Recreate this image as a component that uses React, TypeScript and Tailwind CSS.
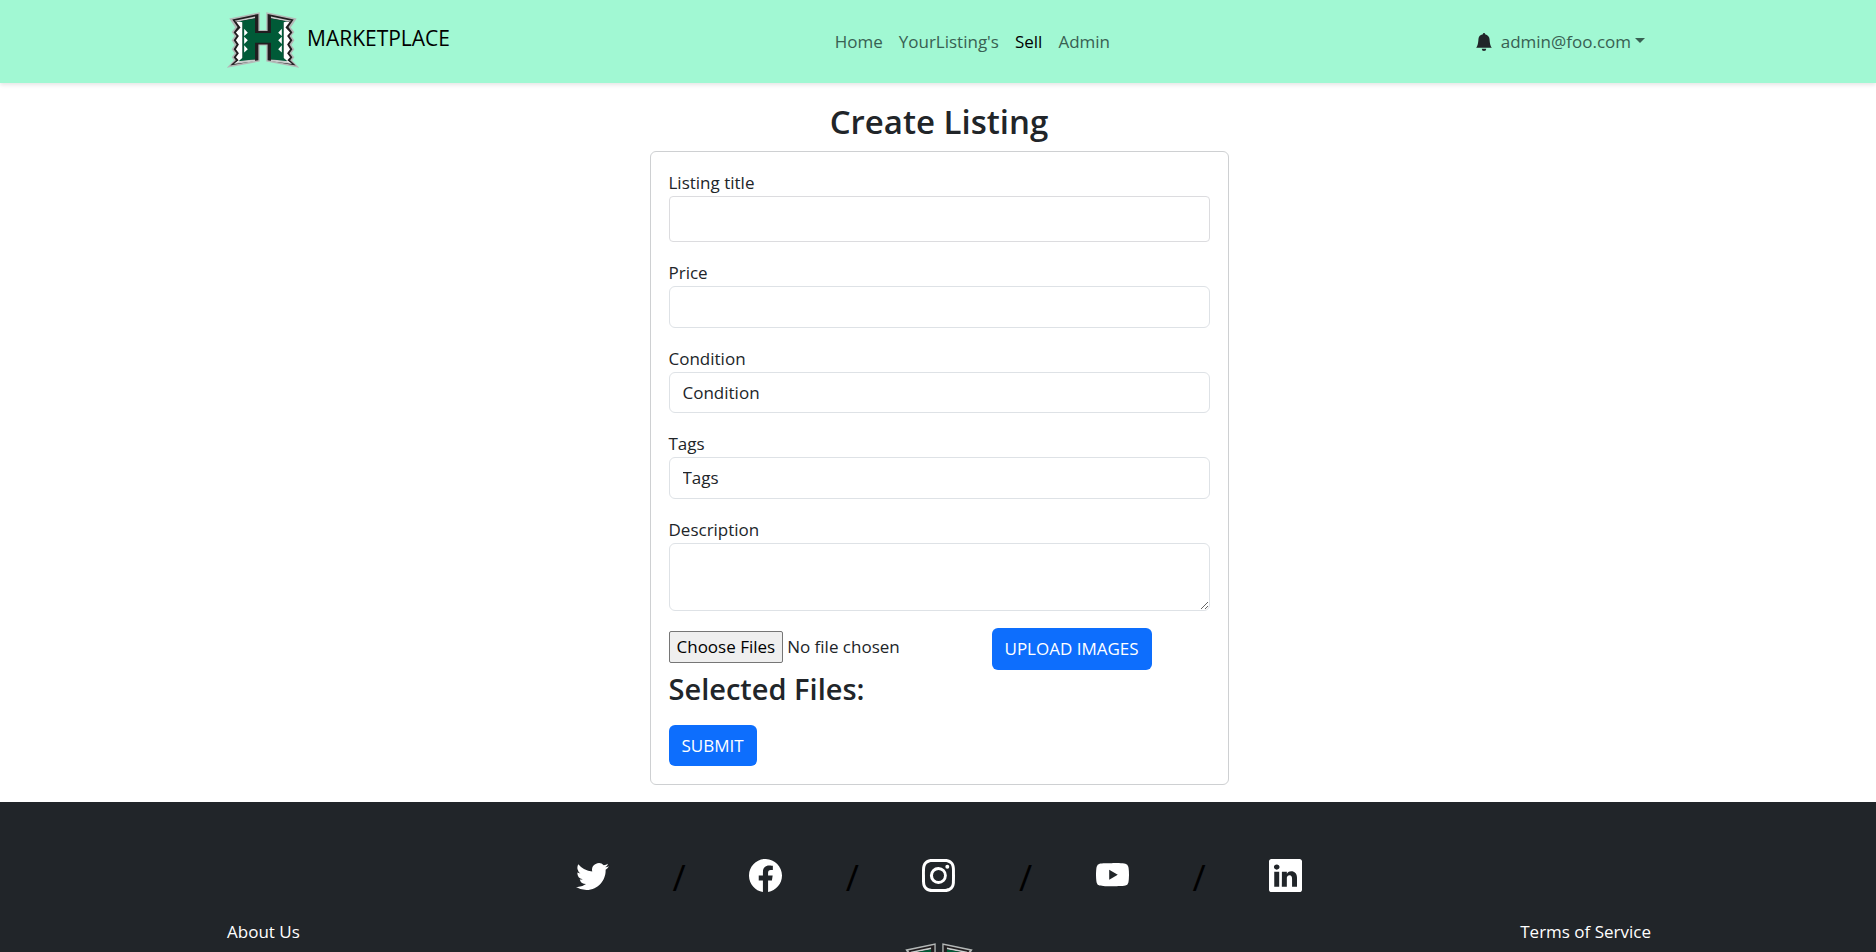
import type { ReactNode } from "react";
import {
  BsBellFill,
  BsFacebook,
  BsInstagram,
  BsLinkedin,
  BsTwitter,
  BsYoutube,
} from "react-icons/bs";

function LogoHalf() {
  return (
    <g>
      <path
        d="M28 33 L120 14 V68 H130 V115 H120 V163 L20 182 L42 159 L35 150 L44 138 L35 126 L44 113 L35 99 L44 86 L35 74 L46 60 Z"
        fill="#b4b8b7"
      />
      <path
        d="M37 36 L116 19 V71 H130 V112 H116 V159 L31 175 L48 159 L41 150 L50 138 L41 126 L50 112 L41 99 L50 86 L41 75 L53 59 Z"
        fill="#211d1f"
      />
      <path d="M44 40 L106 27 V32 L50 43 Z" fill="#c9cdcc" />
      <path d="M42 171 L60 156 L106 157 V162 Z" fill="#c9cdcc" />
      <path
        d="M50 44 L68 40 V159 L44 169 L57 160 L48 150 L57 138 L48 126 L57 112 L48 99 L57 86 L48 75 L62 60 Z"
        fill="#ffffff"
      />
      <path
        d="M56 42 L106 33 V77 H130 V106 H106 V156 L56 162 L68 152 V44 Z"
        fill="#005a37"
      />
      <path d="M73 64 V86 L84 76 Z M73 88 V110 L84 99 Z M73 114 V136 L84 126 Z" fill="#ffffff" />
    </g>
  );
}

function Logo() {
  return (
    <svg viewBox="21 14 218 168" className="h-14 w-18 shrink-0" role="img" aria-label="H logo">
      <LogoHalf />
      <g transform="translate(260 0) scale(-1 1)">
        <LogoHalf />
      </g>
    </svg>
  );
}

function Field({ id, label, children }: { id: string; label: string; children: ReactNode }) {
  return (
    <div className="flex flex-col">
      <label htmlFor={id} className="leading-[26px]">
        {label}
      </label>
      {children}
    </div>
  );
}

function Slash() {
  return <span className="pt-1.5 text-center text-4xl leading-[48px] text-black">/</span>;
}

function Social({ label, children }: { label: string; children: ReactNode }) {
  return (
    <a href="#" aria-label={label} className="flex justify-center text-[33px] text-white">
      {children}
    </a>
  );
}

export default function App() {
  return (
    <div className="flex h-screen flex-col overflow-hidden bg-white font-['Open_Sans','Noto_Sans',sans-serif] text-[17px] text-[#212529]">
      <header className="relative shrink-0 bg-[#a1f8d3] shadow-[0_2px_4px_rgba(0,0,0,0.1)]">
        <div className="mx-auto flex h-[83px] max-w-[1426px] items-center justify-between pl-0.5">
          <a href="#" className="flex items-center gap-2 pb-1 pr-5 text-[21px] text-black">
            <Logo />
            <span className="pb-0.5">MARKETPLACE</span>
          </a>
          <nav className="flex gap-4 text-[#386052]">
            <a href="#">Home</a>
            <a href="#">YourListing's</a>
            <a href="#" className="text-black">
              Sell
            </a>
            <a href="#">Admin</a>
          </nav>
          <div className="flex items-center gap-2 pr-1.5">
            <BsBellFill className="size-[18px]" />
            <button type="button" className="flex items-center gap-1 text-[#386052]">
              admin@foo.com
              <svg viewBox="0 0 10 5" className="mb-0.5 h-[5px] w-2.5" aria-hidden="true">
                <path d="M0 0H10L5 5Z" fill="currentColor" />
              </svg>
            </button>
          </div>
        </div>
      </header>

      <main className="flex shrink-0 flex-col items-center pb-[17px] pl-0.5 pt-[18px]">
        <h2 className="mb-2 text-[33px] font-semibold leading-[42px]">Create Listing</h2>
        <form
          className="w-full max-w-[579px] rounded-md border border-[#ced0d2] px-[18px] py-[18px]"
          onSubmit={(event) => event.preventDefault()}
        >
          <div className="flex flex-col gap-[18px]">
            <Field id="title" label="Listing title">
              <input
                id="title"
                type="text"
                className="h-[46px] rounded border border-[#dcdcdf] px-3"
              />
            </Field>
            <Field id="price" label="Price">
              <input
                id="price"
                type="text"
                className="h-[42px] rounded-md border border-[#dee2e6] px-3"
              />
            </Field>
            <Field id="condition" label="Condition">
              <select
                id="condition"
                className="h-[41px] appearance-none rounded-md border border-[#dee2e6] bg-white px-[13px]"
              >
                <option>Condition</option>
              </select>
            </Field>
            <Field id="tags" label="Tags">
              <select
                id="tags"
                className="h-[42px] appearance-none rounded-md border border-[#dee2e6] bg-white px-[13px]"
              >
                <option>Tags</option>
              </select>
            </Field>
            <Field id="description" label="Description">
              <textarea
                id="description"
                className="h-[68px] resize-y rounded-md border border-[#dee2e6] px-3 py-1.5"
              />
            </Field>
          </div>
          <div className="mt-[17px] flex items-center">
            <input
              type="file"
              multiple
              aria-label="Images"
              className="w-[323px] pb-1 file:mr-1 file:h-8 file:rounded-xs file:border file:border-solid file:border-[#767676] file:bg-[#efefef] file:px-[7px] file:text-black"
            />
            <button type="button" className="h-[42px] rounded-md bg-[#0d6efd] px-[13px] text-white">
              UPLOAD IMAGES
            </button>
          </div>
          <h3 className="mb-[17px] text-[29px] font-semibold leading-[38px]">Selected Files:</h3>
          <button type="submit" className="h-[41px] rounded-md bg-[#0d6efd] px-[13px] text-white">
            SUBMIT
          </button>
        </form>
      </main>

      <footer className="flex-1 bg-[#212529] pt-[46px] text-white">
        <div className="mx-auto grid max-w-[782px] grid-cols-9 items-center pl-0.5">
          <Social label="Twitter">
            <BsTwitter />
          </Social>
          <Slash />
          <Social label="Facebook">
            <BsFacebook />
          </Social>
          <Slash />
          <Social label="Instagram">
            <BsInstagram />
          </Social>
          <Slash />
          <Social label="YouTube">
            <BsYoutube />
          </Social>
          <Slash />
          <Social label="LinkedIn">
            <BsLinkedin />
          </Social>
        </div>
        <div className="mx-auto grid max-w-[1426px] grid-cols-[1fr_auto_1fr] items-start pl-0.5 pt-[17px]">
          <a href="#">About Us</a>
          <div className="pt-6">
            <Logo />
          </div>
          <a href="#" className="justify-self-end">
            Terms of Service
          </a>
        </div>
      </footer>
    </div>
  );
}
